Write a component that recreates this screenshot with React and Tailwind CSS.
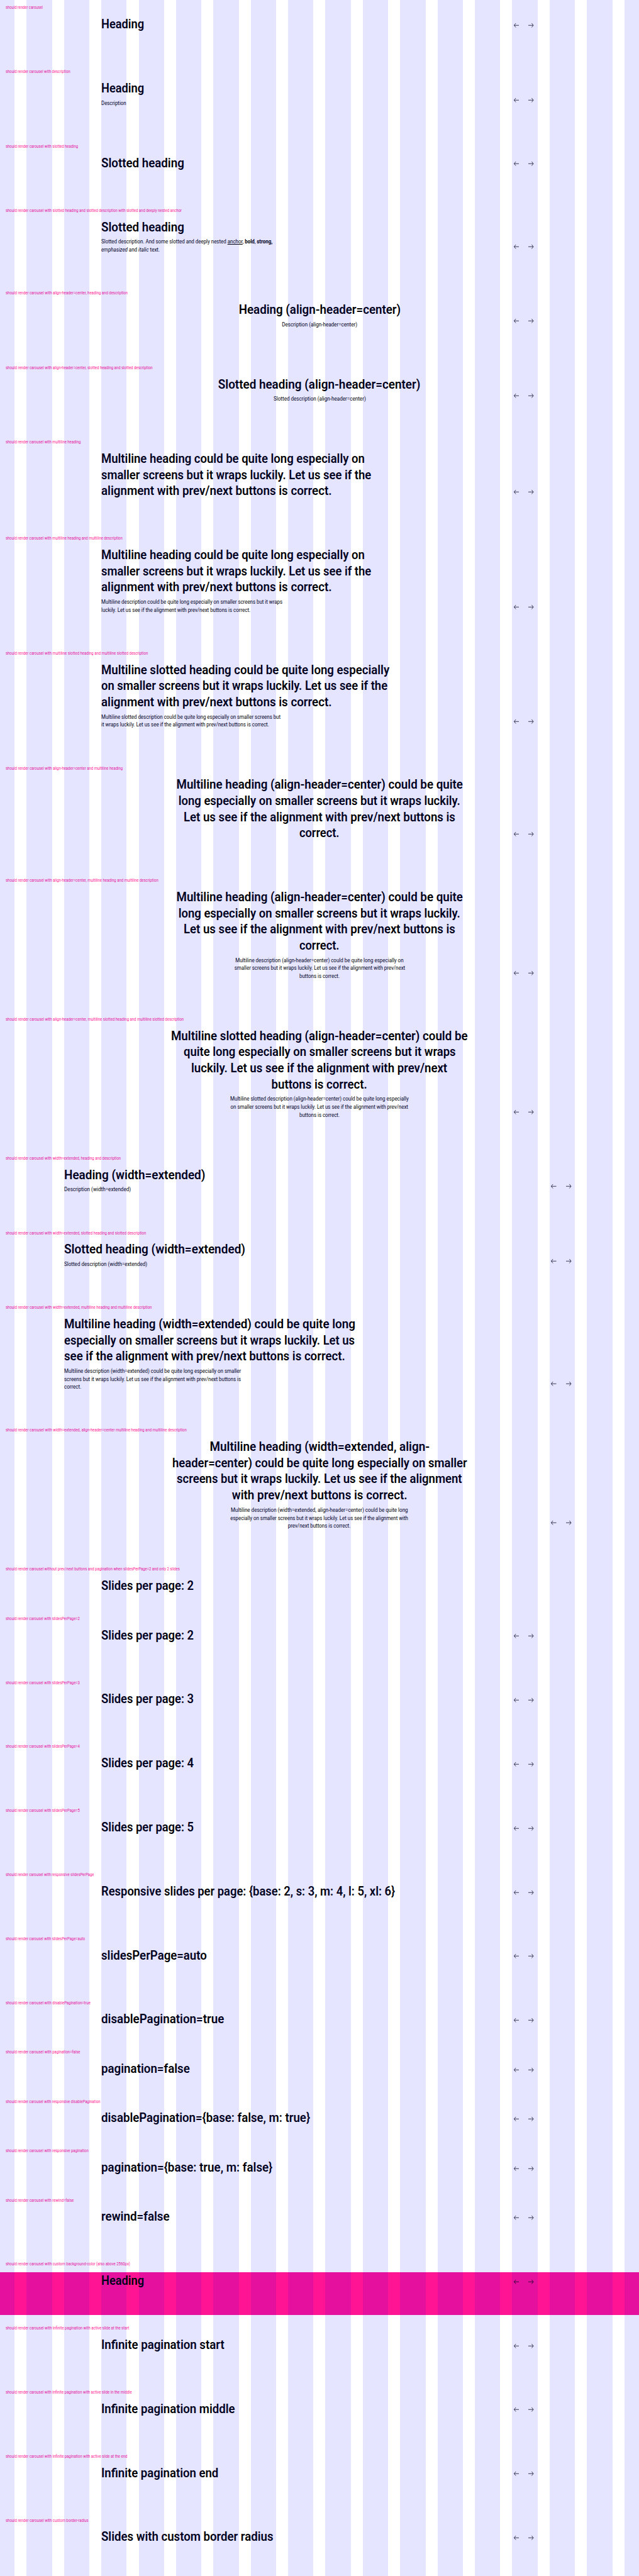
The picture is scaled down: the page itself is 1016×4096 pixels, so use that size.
import { useLayoutEffect, useRef } from "react";

// Squeezes one line of text horizontally to a given width.
function Line({ w, center, children, className = "" }) {
  const ref = useRef(null);
  useLayoutEffect(() => {
    const el = ref.current;
    el.style.transform = `scaleX(${w / el.offsetWidth})`;
  }, [w]);
  return (
    <div className={`flex w-0 ${center ? "mx-auto justify-center" : ""} ${className}`}>
      <span
        ref={ref}
        className={`shrink-0 whitespace-nowrap ${center ? "origin-center" : "origin-left"}`}
      >
        {children}
      </span>
    </div>
  );
}

function Arrow({ flip }) {
  return (
    <svg
      viewBox="0 0 16 16"
      className={`h-[8.5px] w-[8.5px] ${flip ? "-scale-x-100" : ""}`}
      fill="none"
      stroke="#010205"
      strokeWidth="1.4"
    >
      <path d="M16 8H0.8M6 1.8L0.8 8L6 14.2" />
    </svg>
  );
}

const MH = [
  ["Multiline heading could be quite long especially on", 418.5],
  ["smaller screens but it wraps luckily. Let us see if the", 429.5],
  ["alignment with prev/next buttons is correct.", 366.5],
];
const CH = [
  ["Multiline heading (align-header=center) could be quite", 455],
  ["long especially on smaller screens but it wraps luckily.", 447.5],
  ["Let us see if the alignment with prev/next buttons is", 432],
  ["correct.", 64],
];
const p = "should render carousel ";

const sections = [
  { label: [p.trim(), 59], head: [["Heading", 68.5]] },
  { label: [p + "with description", 103], head: [["Heading", 68.5]], desc: [["Description", 40]] },
  { label: [p + "with slotted heading", 115], head: [["Slotted heading", 132]] },
  {
    label: [p + "with slotted heading and slotted description with slotted and deeply nested anchor", 279.5],
    head: [["Slotted heading", 132]],
    desc: [
      [
        <>
          Slotted description. And some slotted and deeply nested <a className="underline underline-offset-1">anchor</a>,{" "}
          <b>bold</b>, <strong>strong,</strong>
        </>,
        272,
      ],
      [
        <>
          <em>emphasized</em> and <i>italic</i> text.
        </>,
        93,
      ],
    ],
  },
  {
    label: [p + "with align-header=center, heading and description", 194],
    center: true,
    head: [["Heading (align-header=center)", 257.5]],
    desc: [["Description (align-header=center)", 119.5]],
  },
  {
    label: [p + "with align-header=center, slotted heading and slotted description", 234],
    center: true,
    head: [["Slotted heading (align-header=center)", 321.5]],
    desc: [["Slotted description (align-header=center)", 147]],
  },
  { label: [p + "with multiline heading", 119.5], head: MH },
  {
    label: [p + "with multiline heading and multiline description", 186],
    head: MH,
    desc: [
      ["Multiline description could be quite long especially on smaller screens but it wraps", 288],
      ["luckily. Let us see if the alignment with prev/next buttons is correct.", 237],
    ],
  },
  {
    label: [p + "with multiline slotted heading and multiline slotted description", 226],
    head: [
      ["Multiline slotted heading could be quite long especially", 458],
      ["on smaller screens but it wraps luckily. Let us see if the", 455],
      ["alignment with prev/next buttons is correct.", 366.5],
    ],
    desc: [
      ["Multiline slotted description could be quite long especially on smaller screens but", 285],
      ["it wraps luckily. Let us see if the alignment with prev/next buttons is correct.", 267],
    ],
  },
  { label: [p + "with align-header=center and multiline heading", 186], center: true, head: CH },
  {
    label: [p + "with align-header=center, multiline heading and multiline description", 243],
    center: true,
    head: CH,
    desc: [
      ["Multiline description (align-header=center) could be quite long especially on", 267.5],
      ["smaller screens but it wraps luckily. Let us see if the alignment with prev/next", 271.5],
      ["buttons is correct.", 64],
    ],
  },
  {
    label: [p + "with align-header=center, multiline slotted heading and multiline slotted description", 283],
    center: true,
    head: [
      ["Multiline slotted heading (align-header=center) could be", 472],
      ["quite long especially on smaller screens but it wraps", 433],
      ["luckily. Let us see if the alignment with prev/next", 407],
      ["buttons is correct.", 152],
    ],
    desc: [
      ["Multiline slotted description (align-header=center) could be quite long especially", 284],
      ["on smaller screens but it wraps luckily. Let us see if the alignment with prev/next", 282],
      ["buttons is correct.", 64],
    ],
  },
  {
    label: [p + "with width=extended, heading and description", 183],
    wide: true,
    head: [["Heading (width=extended)", 224.5]],
    desc: [["Description (width=extended)", 106]],
  },
  {
    label: [p + "with width=extended, slotted heading and slotted description", 223.5],
    wide: true,
    head: [["Slotted heading (width=extended)", 288]],
    desc: [["Slotted description (width=extended)", 132.5]],
  },
  {
    label: [p + "with width=extended, multiline heading and multiline description", 232.5],
    wide: true,
    head: [
      ["Multiline heading (width=extended) could be quite long", 462.5],
      ["especially on smaller screens but it wraps luckily. Let us", 462],
      ["see if the alignment with prev/next buttons is correct.", 447],
    ],
    desc: [
      ["Multiline description (width=extended) could be quite long especially on smaller", 281],
      ["screens but it wraps luckily. Let us see if the alignment with prev/next buttons is", 281],
      ["correct.", 27],
    ],
  },
  {
    label: [p + "with width=extended, align-header=center multiline heading and multiline description", 288],
    wide: true,
    center: true,
    head: [
      ["Multiline heading (width=extended, align-", 350],
      ["header=center) could be quite long especially on smaller", 469],
      ["screens but it wraps luckily. Let us see if the alignment", 454],
      ["with prev/next buttons is correct.", 278.5],
    ],
    desc: [
      ["Multiline description (width=extended, align-header=center) could be quite long", 282],
      ["especially on smaller screens but it wraps luckily. Let us see if the alignment with", 282.5],
      ["prev/next buttons is correct.", 99.5],
    ],
  },
  {
    label: [p + "without prev/next buttons and pagination when slidesPerPage=2 and only 2 slides", 277],
    head: [["Slides per page: 2", 147]],
    short: true,
    bare: true,
  },
  { label: [p + "with slidesPerPage=2", 118], head: [["Slides per page: 2", 147]] },
  { label: [p + "with slidesPerPage=3", 118], head: [["Slides per page: 3", 147]] },
  { label: [p + "with slidesPerPage=4", 118], head: [["Slides per page: 4", 147]] },
  { label: [p + "with slidesPerPage=5", 118], head: [["Slides per page: 5", 147]] },
  {
    label: [p + "with responsive slidesPerPage", 140.5],
    head: [["Responsive slides per page: {base: 2, s: 3, m: 4, l: 5, xl: 6}", 467.5]],
  },
  { label: [p + "with slidesPerPage=auto", 126.5], head: [["slidesPerPage=auto", 167.5]] },
  { label: [p + "with disablePagination=true", 135], head: [["disablePagination=true", 195]], short: true },
  { label: [p + "with pagination=false", 118], head: [["pagination=false", 140.5]], short: true },
  {
    label: [p + "with responsive disablePagination", 150.5],
    head: [["disablePagination={base: false, m: true}", 332.5]],
    short: true,
  },
  {
    label: [p + "with responsive pagination", 131.5],
    head: [["pagination={base: true, m: false}", 272]],
    short: true,
  },
  { label: [p + "with rewind=false", 108], head: [["rewind=false", 109]] },
  {
    label: [p + "with custom background-color (also above 2560px)", 198],
    head: [["Heading", 68.5]],
    pink: true,
  },
  {
    label: [p + "with infinite pagination with active slide at the start", 196.5],
    head: [["Infinite pagination start", 196]],
  },
  {
    label: [p + "with infinite pagination with active slide in the middle", 201],
    head: [["Infinite pagination middle", 213]],
  },
  {
    label: [p + "with infinite pagination with active slide at the end", 193.5],
    head: [["Infinite pagination end", 186.5]],
  },
  {
    label: [p + "with custom border-radius", 131.5],
    head: [["Slides with custom border radius", 273.5]],
  },
];

function Carousel({ label, head, desc, center, wide, short, bare, pink }) {
  return (
    <section className="pb-[9.1px]">
      <div className="h-[25.2px] pl-[8.5px] pt-[7.4px] text-[7.6px] leading-[10px] text-[#ff1493]">
        <Line w={label[1]}>{label[0]}</Line>
      </div>
      <div
        className={`${short ? "pb-[18.6px]" : "pb-[41.95px]"} ${wide ? "px-[101.5px]" : "px-[161.2px]"} ${
          pink ? "bg-[#ff1493]" : ""
        }`}
      >
        <div className="flex items-end">
          <div className="min-w-0 flex-1">
            {head.map(([text, w], i) => (
              <Line key={i} w={w} center={center} className="h-[25.6px] text-[20px] font-semibold leading-[27.4px]">
                {text}
              </Line>
            ))}
            {desc && (
              <div className="pt-[4.2px]">
                {desc.map(([text, w], i) => (
                  <Line key={i} w={w} center={center} className="h-[12.7px] text-[9.2px] leading-[14px]">
                    {text}
                  </Line>
                ))}
              </div>
            )}
          </div>
          {!bare && (
            <div className="-ml-[38.2px] flex w-[38.2px] justify-start gap-[14.8px] pb-[6.4px]">
              <Arrow />
              <Arrow flip />
            </div>
          )}
        </div>
      </div>
    </section>
  );
}

export default function App() {
  return (
    <div
      className="relative h-[4096px] w-[1016px] overflow-hidden bg-white text-[#010205]"
      style={{ fontFamily: 'Roboto, "Liberation Sans", sans-serif' }}
    >
      {sections.map((s, i) => (
        <Carousel key={i} {...s} />
      ))}
      <div className="pointer-events-none absolute inset-y-0 -left-[17.07px] flex gap-[19.05px]">
        {Array.from({ length: 18 }, (_, i) => (
          <div key={i} className="w-[40.35px] shrink-0 bg-[#0000ff]/10" />
        ))}
      </div>
    </div>
  );
}
